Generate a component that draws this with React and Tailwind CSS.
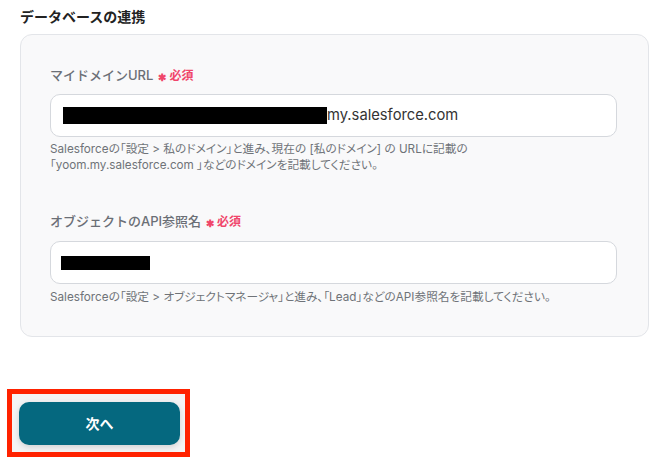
import React from 'react';

const font = { fontFamily: "Inter, 'Noto Sans CJK JP', 'Noto Sans', sans-serif" };

function Required() {
  return (
    <span className="ml-[5px] inline-flex items-center text-[12px] font-semibold text-[#f0466a]">
      <span className="mr-[3px] mt-[2px] text-[10px] leading-none">✱</span>必須
    </span>
  );
}

function Field({ label, children, help, className = '' }) {
  return (
    <div className={className}>
      <div className="flex h-[18px] items-center text-[13px] font-medium text-[#6b6f76]">
        {label}
        <Required />
      </div>
      {children}
      <div className="text-[11.7px] leading-[16px] text-[#6f7378] [font-feature-settings:'palt']">{help}</div>
    </div>
  );
}

export default function App() {
  return (
    <div className="h-[466px] w-[663px] overflow-hidden bg-white" style={font}>
      <div className="pl-[20px] pr-[14px]">
        <h2 className="pt-[7px] text-[14px] font-semibold leading-[20px] text-[#222]">データベースの連携</h2>

        {/* settings card */}
        <div className="mt-[7px] rounded-[12px] border border-[#e3e5e9] bg-[#f9f9fa] px-[29px] pb-[31px] pt-[32px]">
          <Field
            label="マイドメインURL"
            help={
              <div className="mt-[4px]">
                Salesforceの「設定 &gt; 私のドメイン」と進み、現在の [私のドメイン] の URLに記載の
                <br />
                「yoom.my.salesforce.com 」などのドメインを記載してください。
              </div>
            }
          >
            <div className="mt-[9px] flex h-[43px] w-[567px] items-center rounded-[10px] border border-[#d5d8dd] bg-white pl-[12px]">
              <span className="h-[17px] w-[264px] bg-black" />
              <span className="text-[14.75px] text-[#333]">my.salesforce.com</span>
            </div>
          </Field>

          <Field
            className="mt-[40px]"
            label="オブジェクトのAPI参照名"
            help={
              <div className="mt-[5px]">
                Salesforceの「設定 &gt; オブジェクトマネージャ」と進み、「Lead」などのAPI参照名を記載してください。
              </div>
            }
          >
            <div className="mt-[10px] flex h-[43px] w-[567px] items-center rounded-[10px] border border-[#d5d8dd] bg-white pl-[10px]">
              <span className="h-[14px] w-[89px] bg-black" />
            </div>
          </Field>
        </div>
      </div>

      {/* next button with annotation frame */}
      <div className="ml-[7px] mt-[52px] inline-block border-[5px] border-[#ff2200] bg-[#f4f4f5] pb-[7px] pl-[7px] pr-[5px] pt-[8px]">
        <button className="flex h-[43px] w-[161px] items-center justify-center rounded-[10px] bg-[#05687f] text-[14px] font-bold text-white shadow-[0_2px_6px_rgba(0,0,0,0.15)]">
          次へ
        </button>
      </div>
    </div>
  );
}
